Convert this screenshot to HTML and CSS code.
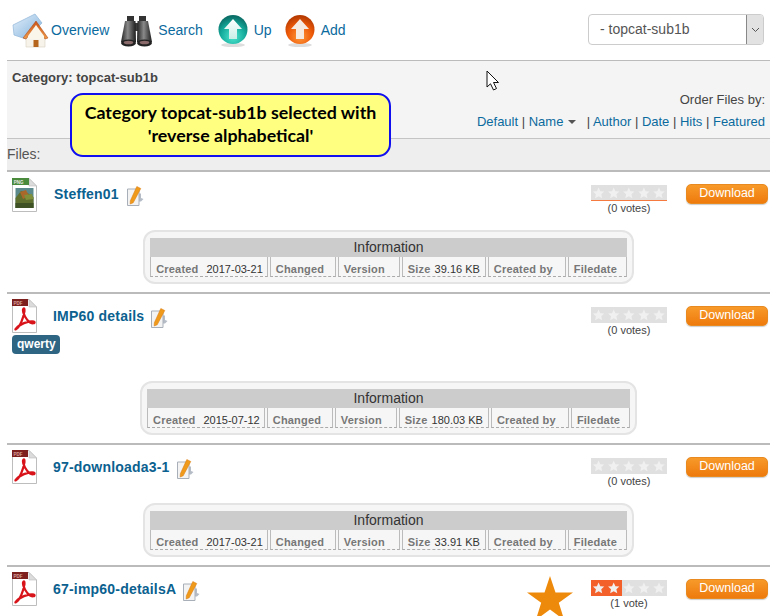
FILE: index.html
```html
<!DOCTYPE html>
<html lang="en">
<head>
<meta charset="utf-8">
<title>Category topcat-sub1b</title>
<link rel="stylesheet" href="styles.css">
</head>
<body>
<svg class="defs" aria-hidden="true">
  <defs>
    <radialGradient id="teal" cx="50%" cy="75%" r="70%"><stop offset="0" stop-color="#4fe6cf"/><stop offset=".6" stop-color="#14ab9c"/><stop offset="1" stop-color="#0b6f68"/></radialGradient>
    <radialGradient id="orange" cx="50%" cy="75%" r="70%"><stop offset="0" stop-color="#ff9a3c"/><stop offset=".6" stop-color="#ee5a08"/><stop offset="1" stop-color="#b83c02"/></radialGradient>
    <linearGradient id="arrowfill" x1="0" y1="0" x2="0" y2="1"><stop offset="0" stop-color="#ffffff"/><stop offset="1" stop-color="#c8efe6"/></linearGradient>
    <linearGradient id="barrel" x1="0" y1="0" x2="1" y2="0"><stop offset="0" stop-color="#222"/><stop offset=".45" stop-color="#8a8a8a"/><stop offset="1" stop-color="#1c1c1c"/></linearGradient>
    <linearGradient id="roof" x1="0" y1="0" x2="0" y2="1"><stop offset="0" stop-color="#c9541a"/><stop offset="1" stop-color="#ee9a4a"/></linearGradient>
    <linearGradient id="paper" x1="0" y1="0" x2="1" y2="1"><stop offset="0" stop-color="#e4f0fa"/><stop offset="1" stop-color="#7fb0dc"/></linearGradient>
    <symbol id="pdf" viewBox="0 0 25 34">
      <path d="M.5.5H17L24.5 8V33.5H.5Z" fill="#fff" stroke="#bdbdbd"/>
      <path d="M17 .5V8H24.5Z" fill="#dcdcdc" stroke="#bdbdbd" stroke-width=".6"/>
      <path d="M0 0H16V7H0Z" fill="#7d1f1c"/>
      <text x="1.6" y="5.8" class="badge-text badge-pdf">PDF</text>
      <path d="M3.5 30.500C8 28 11.500 19 12.500 12C12.800 9 11.600 8.500 11 10.500C10.500 14 14.500 21.500 18 23.500C20.500 24.700 23 24.500 22.500 23C21.500 21.500 13.500 22.500 7.500 26.500C4.800 28.300 3 30.500 3.500 30.500Z" fill="none" stroke="#d8141a" stroke-width="2.200"/>
    </symbol>
    <symbol id="edit" viewBox="0 0 17 20">
      <path d="M11.500 7.500H14V12L16.500 13L14 15.500H11.500Z" fill="#b5bcc6"/>
      <path d="M.5 3H12V19.500H.5Z" fill="#f3f3f3" stroke="#a9afb8"/>
      <path d="M9.800.5L13.800 2.500L6.200 16.800L3.200 18L3.300 14.800Z" fill="#f09a1c" stroke="#d9780b" stroke-width=".5"/>
    </symbol>
    <symbol id="stars" viewBox="0 0 77 16">
      <path id="s1" d="M7.700 2.500L9.400 6.200L13.400 6.600L10.400 9.300L11.300 13.300L7.700 11.200L4.100 13.300L5 9.300L2 6.600L6 6.200Z" fill="#f0f0f0"/>
      <use href="#s1" x="15.300"/><use href="#s1" x="30.600"/><use href="#s1" x="45.900"/><use href="#s1" x="61.200"/>
    </symbol>
  </defs>
</svg>

<div class="page">
  <header class="topbar">
    <nav class="nav">
      <a class="nav-item nav-home" href="#">
        <svg class="nav-icon nav-icon-wide" width="34" height="34" viewBox="0 0 34 34">
          <path d="M0 11L22 0L29 9L13 25L1 21Z" fill="url(#paper)" stroke="#8fb6d8" stroke-width=".7"/>
          <path d="M13 33V22H32V33Z" fill="#f7f3ea" stroke="#d9d2c0" stroke-width=".6"/>
          <path d="M23 7L35 24L32 25L23 13L13 25L10 24Z" fill="url(#roof)" stroke="#a8430f" stroke-width=".5"/>
          <path d="M23 11L31 22V25H15V22Z" fill="#fbf6ea"/>
          <path d="M20.500 26H25.500V33H20.500Z" fill="#b5651d"/>
        </svg>
        <span>Overview</span>
      </a>
      <a class="nav-item" href="#">
        <svg class="nav-icon" width="33" height="34" viewBox="0 0 33 34">
          <path d="M7 2H14V9H7ZM19 2H26V9H19Z" fill="#333"/>
          <path d="M12 9H21V17H12Z" fill="#3c3c3c"/>
          <path d="M5 7H15.500L16 28H1Z" fill="url(#barrel)"/>
          <path d="M17.500 7H28L32 28H17Z" fill="url(#barrel)"/>
          <ellipse cx="8.500" cy="29" rx="7.500" ry="3.500" fill="#222"/>
          <ellipse cx="24.500" cy="29" rx="7.500" ry="3.500" fill="#222"/>
          <ellipse cx="8.500" cy="28.500" rx="4.800" ry="1.800" fill="#8a6a6a"/>
          <ellipse cx="24.500" cy="28.500" rx="4.800" ry="1.800" fill="#8a6a6a"/>
        </svg>
        <span>Search</span>
      </a>
      <a class="nav-item nav-up" href="#">
        <svg class="nav-icon" width="31" height="34" viewBox="0 0 31 34">
          <ellipse cx="15" cy="31" rx="12" ry="2" fill="#ddd"/>
          <circle cx="15" cy="15.500" r="14.500" fill="url(#teal)"/>
          <path d="M15 5L24 15H19V25H11V15H6Z" fill="url(#arrowfill)"/>
        </svg>
        <span>Up</span>
      </a>
      <a class="nav-item nav-add" href="#">
        <svg class="nav-icon" width="31" height="34" viewBox="0 0 31 34">
          <ellipse cx="15" cy="31" rx="12" ry="2" fill="#ddd"/>
          <circle cx="15" cy="15.500" r="14.500" fill="url(#orange)"/>
          <path d="M15 5L24 15H19V25H11V15H6Z" fill="#f6ebe2"/>
        </svg>
        <span>Add</span>
      </a>
    </nav>
    <div class="select">
      <span class="select-value">- topcat-sub1b</span>
      <span class="select-arrow">
        <svg width="9" height="6" viewBox="0 0 9 6"><path d="M1 1L4.500 4.500L8 1" fill="none" stroke="#555" stroke-width="1"/></svg>
      </span>
    </div>
  </header>

  <section class="category">
    <div class="category-title">Category: topcat-sub1b</div>
    <div class="order">
      <div class="order-label">Order Files by:</div>
      <div class="order-links"><a href="#">Default</a> | <a href="#">Name</a> <i class="caret"></i> <span class="sep">|</span> <a href="#">Author</a> | <a href="#">Date</a> | <a href="#">Hits</a> | <a href="#">Featured</a></div>
    </div>
  </section>

  <div class="files-label">Files:</div>

  <article class="item">
    <div class="item-head">
      <svg class="file-icon file-icon-png" width="25" height="34" viewBox="0 0 25 34">
        <path d="M.5.5H17L24.500 8V33.500H.5Z" fill="#fff" stroke="#bdbdbd"/>
        <path d="M17 .5V8H24.500Z" fill="#dcdcdc" stroke="#bdbdbd" stroke-width=".6"/>
        <path d="M0 0H17V7H0Z" fill="#4a8a3c"/>
        <text x="1.800" y="5.800" class="badge-text">PNG</text>
        <path d="M3.500 10H21.500V30H3.500Z" fill="#5c8a8c"/>
        <path d="M3.500 20L9 13L14 14L21.500 19V30H3.500Z" fill="#5f6f2e"/>
        <path d="M8 14L14 12L17 18L11 21Z" fill="#a9682a"/>
        <path d="M12 17L20 16L21.500 21L14 22Z" fill="#7f8f3a"/>
        <path d="M3.500 25H21.500V30H3.500Z" fill="#3f5226"/>
      </svg>
      <a class="title title-first" href="#">Steffen01</a>
      <svg class="edit edit-first" width="17" height="20"><use href="#edit"/></svg>
      <div class="rating">
        <div class="stars stars-line">
          <svg width="76" height="16" preserveAspectRatio="none" viewBox="0 0 77 16"><use href="#stars"/></svg>
        </div>
        <div class="votes">(0 votes)</div>
      </div>
      <a class="download" href="#">Download</a>
    </div>
    <div class="info">
      <div class="info-title">Information</div>
      <div class="info-row">
        <div class="cell cell-date"><b>Created</b>2017-03-21</div>
        <div class="cell cell-empty cell-changed"><b>Changed</b></div>
        <div class="cell cell-empty cell-version"><b>Version</b></div>
        <div class="cell cell-size"><b>Size</b>39.16 KB</div>
        <div class="cell cell-empty cell-by"><b>Created by</b></div>
        <div class="cell cell-empty cell-filedate"><b>Filedate</b></div>
      </div>
    </div>
  </article>

  <article class="item item-tagged">
    <div class="item-head">
      <svg class="file-icon" width="25" height="34"><use href="#pdf"/></svg>
      <a class="title" href="#">IMP60 details</a>
      <svg class="edit" width="17" height="20"><use href="#edit"/></svg>
      <div class="rating">
        <div class="stars"><svg width="76" height="16" preserveAspectRatio="none" viewBox="0 0 77 16"><use href="#stars"/></svg></div>
        <div class="votes">(0 votes)</div>
      </div>
      <a class="download" href="#">Download</a>
    </div>
    <div class="tag-row"><span class="tag">qwerty</span></div>
    <div class="info">
      <div class="info-title">Information</div>
      <div class="info-row">
        <div class="cell cell-date"><b>Created</b>2015-07-12</div>
        <div class="cell cell-empty cell-changed"><b>Changed</b></div>
        <div class="cell cell-empty cell-version"><b>Version</b></div>
        <div class="cell cell-size"><b>Size</b>180.03 KB</div>
        <div class="cell cell-empty cell-by"><b>Created by</b></div>
        <div class="cell cell-empty cell-filedate"><b>Filedate</b></div>
      </div>
    </div>
  </article>

  <article class="item">
    <div class="item-head">
      <svg class="file-icon" width="25" height="34"><use href="#pdf"/></svg>
      <a class="title" href="#">97-downloada3-1</a>
      <svg class="edit" width="17" height="20"><use href="#edit"/></svg>
      <div class="rating">
        <div class="stars"><svg width="76" height="16" preserveAspectRatio="none" viewBox="0 0 77 16"><use href="#stars"/></svg></div>
        <div class="votes">(0 votes)</div>
      </div>
      <a class="download" href="#">Download</a>
    </div>
    <div class="info">
      <div class="info-title">Information</div>
      <div class="info-row">
        <div class="cell cell-date"><b>Created</b>2017-03-21</div>
        <div class="cell cell-empty cell-changed"><b>Changed</b></div>
        <div class="cell cell-empty cell-version"><b>Version</b></div>
        <div class="cell cell-size"><b>Size</b>33.91 KB</div>
        <div class="cell cell-empty cell-by"><b>Created by</b></div>
        <div class="cell cell-empty cell-filedate"><b>Filedate</b></div>
      </div>
    </div>
  </article>

  <article class="item item-last">
    <div class="item-head">
      <svg class="file-icon" width="25" height="34"><use href="#pdf"/></svg>
      <a class="title" href="#">67-imp60-detailsA</a>
      <svg class="edit" width="17" height="20"><use href="#edit"/></svg>
      <div class="rating">
        <div class="stars stars-two"><svg width="76" height="16" preserveAspectRatio="none" viewBox="0 0 77 16"><use href="#stars"/></svg></div>
        <div class="votes">(1 vote)</div>
      </div>
      <a class="download" href="#">Download</a>
    </div>
  </article>
</div>

<div class="callout">Category topcat-sub1b selected with<br>'reverse alphabetical'</div>
<svg class="cursor" width="14" height="21" viewBox="0 0 14 21"><path d="M1 1V17L4.500 13.800L7.500 20L10.500 18.500L7.500 12.500H12.500Z" fill="#fff" stroke="#111" stroke-width="1"/></svg>
<svg class="big-star" width="46" height="40" viewBox="0 0 46 40"><path d="M23 0L28.500 16.500H46L31.800 26.800L37.200 44L23 33.500L8.800 44L14.200 26.800L0 16.500H17.500Z" fill="#ee8a0b"/></svg>
</body>
</html>
```

FILE: styles.css
```css
* { box-sizing: border-box; }
html, body { margin: 0; height: 100%; overflow: hidden; background: #fff; }
body { font-family: "Liberation Sans", Arial, sans-serif; font-size: 14px; color: #444; position: relative; }
a { color: #0b6a9e; text-decoration: none; }
.defs { position: absolute; width: 0; height: 0; }
.page { width: 763px; margin-left: 7px; }

.topbar { height: 61px; display: flex; justify-content: space-between; align-items: flex-start; padding: 14px 6px 0 6px; border-bottom: 1px solid #bbb; }
.nav { display: flex; gap: 11px; }
.nav-item { display: flex; align-items: center; gap: 5px; height: 34px; }
.nav-home { gap: 4px; }
.nav-icon-wide { overflow: visible; }
.nav-up { margin-left: 4px; }
.nav-add { margin-left: 2px; }
.nav-item span { position: relative; top: -1px; }
.select { width: 176px; height: 31px; display: flex; border: 1px solid #ccc; border-radius: 4px; background: #fff; color: #555; }
.select-value { flex: 1; padding: 0 11px; line-height: 29px; }
.select-arrow { width: 17px; display: flex; align-items: center; justify-content: center; background: #e2e2e2; border-left: 1px solid #888; border-radius: 0 3px 3px 0; }

.category { height: 78px; background: #f4f4f4; border-bottom: 1px solid #c4c4c4; padding: 9px 5px 0 5px; display: flex; flex-direction: column; }
.category-title { font-size: 13px; font-weight: bold; line-height: 15px; color: #444; }
.order { margin-top: 7px; text-align: right; font-size: 13px; color: #444; }
.order-label { line-height: 16px; }
.order-links { margin-top: 6px; line-height: 16px; }
.caret { display: inline-block; width: 0; height: 0; border: 4px solid transparent; border-top-color: #555; border-bottom-width: 0; margin: 0 7px 2px 1px; vertical-align: middle; }

.files-label { height: 33px; background: #eee; border-bottom: 2px solid #bbb; line-height: 30px; color: #555; }

.item { border-bottom: 2px solid #bbb; height: 122px; }
.item-tagged { height: 151px; }
.item-last { height: 49px; border-bottom: 0; }
.item-head { height: 58px; display: flex; align-items: flex-start; padding-left: 5px; padding-right: 2px; }
.item-last .item-head { height: 49px; }
.file-icon { margin-top: 5px; flex: none; }
.file-icon-png { margin-top: 6px; }
.title { font-weight: bold; font-size: 14px; letter-spacing: .2px; color: #0b618f; margin: 14px 0 0 16px; line-height: 16px; }
.title-first { margin-left: 17px; }
.edit { margin: 14px 0 0 7px; flex: none; }
.edit-first { margin-left: 8px; }
.rating { margin-left: auto; width: 76px; margin-top: 13px; text-align: center; }
.stars { height: 16px; background: #e0e0e0; }
.stars svg { display: block; }
.stars-line { box-shadow: inset 0 -1px 0 #f47a40; }
.stars-two { background: linear-gradient(to right, #f4602a 31px, #e0e0e0 31px); }
.votes { font-size: 11px; line-height: 13px; margin-top: 1px; color: #444; }
.download { margin: 12px 0 0 19px; width: 82px; height: 20px; border-radius: 5px; background: linear-gradient(#f79a2a, #ee7a0c); border: 1px solid #e88a20; color: #fff; font-size: 12.500px; line-height: 17px; text-align: center; box-shadow: 0 1px 1px #ccc; }

.tag-row { height: 46px; margin-top: -17px; padding-left: 5px; }
.tag { display: inline-block; height: 19px; padding: 0 4px 0 5px; border-radius: 4px; background: #2e6583; color: #fff; font-weight: bold; font-size: 12px; line-height: 18px; }

.info { width: fit-content; margin: 0 auto; padding: 6px 5px 5px; background: #f6f6f6; border: 2px solid #e4e4e4; border-radius: 12px; }
.info-title { height: 19px; background: #ccc; text-align: center; font-size: 14px; line-height: 19px; color: #333; }
.info-row { display: flex; gap: 2px; }
.cell { height: 20px; padding: 0 6px 0 5px; background: #f6f6f6; border: 1px solid #bbb; border-top: 0; border-bottom: 1px dashed #aaa; font-size: 11px; line-height: 25px; color: #333; white-space: nowrap; }
.cell b { color: #777; margin-right: 7px; letter-spacing: .2px; }
.cell-date { padding-right: 4px; }
.cell-date b { margin-right: 8px; }
.cell-size { padding-right: 5px; }
.cell-size b { margin-right: 4px; }
.cell-empty b { margin-right: 0; }
.cell-changed { min-width: 66px; }
.cell-version { min-width: 62px; }
.cell-by { min-width: 78px; }
.cell-filedate { min-width: 59px; }

.callout { position: absolute; left: 70px; top: 93px; width: 321px; height: 64px; border: 2px solid #0f0ff0; border-radius: 13px; background: #ffff80; color: #000; font-family: Lato, sans-serif; font-weight: bold; font-size: 17.800px; line-height: 23px; text-align: center; padding-top: 6px; }
.cursor { position: absolute; left: 486px; top: 70px; }
.big-star { position: absolute; left: 527px; top: 576px; }
.badge-text { font-family: "Liberation Sans", sans-serif; font-size: 4.500px; font-weight: bold; fill: #e8e8e8; }
.badge-pdf { fill: #d8a8a0; }
```
